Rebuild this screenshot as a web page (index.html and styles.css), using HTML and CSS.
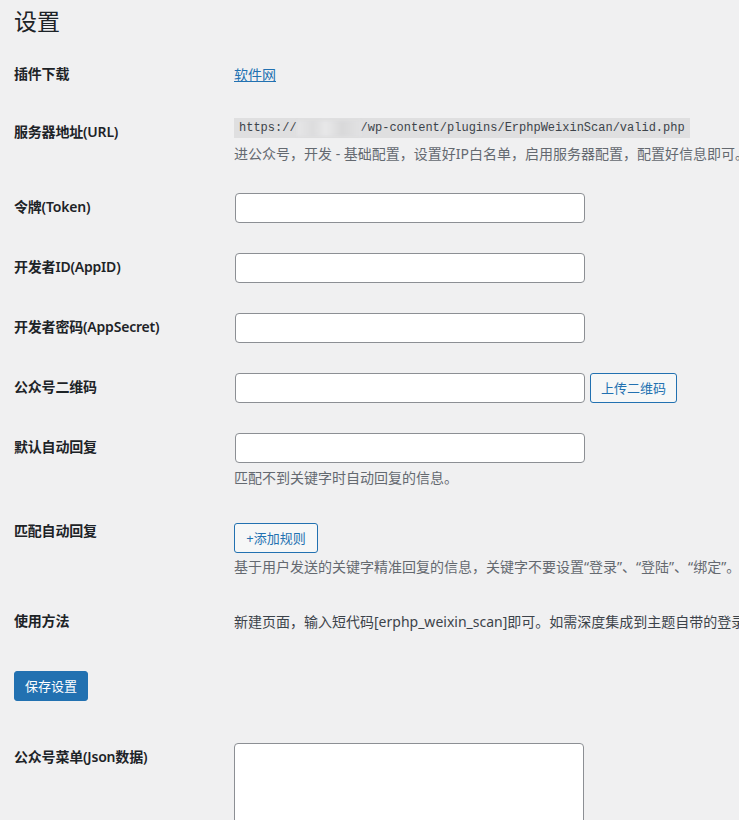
FILE: index.html
```html
<!DOCTYPE html>
<html lang="zh-CN">
<head>
<meta charset="utf-8">
<title>设置</title>
<link rel="stylesheet" href="styles.css">
</head>
<body>
<div class="wrap">
  <h1 class="page-title">设置</h1>
  <form>
    <table class="form-table">
      <tr>
        <th>插件下载</th>
        <td class="text-cell"><a href="#" class="link">软件网</a></td>
      </tr>
      <tr>
        <th>服务器地址(URL)</th>
        <td>
          <div class="code-line"><code>https://<span class="blur"></span>/wp-content/plugins/ErphpWeixinScan/valid.php</code></div>
          <p class="description desc-url">进公众号，开发 - 基础配置，设置好IP白名单，启用服务器配置，配置好信息即可。</p>
        </td>
      </tr>
      <tr>
        <th>令牌(Token)</th>
        <td><input type="text" class="regular-text"></td>
      </tr>
      <tr>
        <th>开发者ID(AppID)</th>
        <td><input type="text" class="regular-text"></td>
      </tr>
      <tr>
        <th>开发者密码(AppSecret)</th>
        <td><input type="text" class="regular-text"></td>
      </tr>
      <tr>
        <th>公众号二维码</th>
        <td>
          <div class="input-row">
            <input type="text" class="regular-text">
            <button type="button" class="button">上传二维码</button>
          </div>
        </td>
      </tr>
      <tr>
        <th>默认自动回复</th>
        <td>
          <input type="text" class="regular-text">
          <p class="description desc-after-input">匹配不到关键字时自动回复的信息。</p>
        </td>
      </tr>
      <tr>
        <th>匹配自动回复</th>
        <td>
          <div class="rule-row"><button type="button" class="button button-add">+添加规则</button></div>
          <p class="description desc-after-button">基于用户发送的关键字精准回复的信息，关键字不要设置“登录”、“登陆”、“绑定”。</p>
        </td>
      </tr>
      <tr>
        <th>使用方法</th>
        <td class="text-cell">新建页面，输入短代码[erphp_weixin_scan]即可。如需深度集成到主题自带的登录里</td>
      </tr>
    </table>
    <p class="submit"><button type="button" class="button button-primary">保存设置</button></p>
    <table class="form-table">
      <tr>
        <th>公众号菜单(Json数据)</th>
        <td><textarea class="menu-json"></textarea></td>
      </tr>
    </table>
  </form>
</div>
</body>
</html>
```

FILE: styles.css
```css
html {
  overflow-x: hidden;
}

body {
  margin: 0;
  background: #f0f0f1;
  color: #3c434a;
  font-family: "Noto Sans", "Noto Sans CJK SC", sans-serif;
  font-size: 13px;
  line-height: 1.4;
}

.wrap {
  padding: 0 0 40px 14px;
}

.page-title {
  margin: 0;
  padding: 7px 0 0;
  font-size: 23px;
  font-weight: 400;
  line-height: 1.3;
  color: #1d2327;
}

.form-table {
  table-layout: fixed;
  width: 725px;
  border-collapse: collapse;
  margin-top: 8px;
  white-space: nowrap;
}

.form-table th {
  width: 200px;
  padding: 20px 10px 20px 0;
  text-align: left;
  vertical-align: top;
  font-size: 14px;
  font-weight: 600;
  line-height: 1.3;
  color: #1d2327;
  letter-spacing: -0.2px;
}

.form-table td {
  padding: 15px 10px;
  vertical-align: top;
  font-size: 14px;
  line-height: 1.3;
  color: #3c434a;
}

.link {
  color: #2271b1;
  text-decoration: underline;
}

.code-line {
  line-height: 20px;
  height: 20px;
}

code {
  display: inline-block;
  vertical-align: top;
  padding: 3px 5px 2px;
  line-height: 15px;
  font-family: "Liberation Mono", "DejaVu Sans Mono", monospace;
  font-size: 12px;
  color: #3c434a;
  background: rgba(0, 0, 0, 0.07);
}

.blur {
  display: inline-block;
  vertical-align: top;
  width: 64px;
  height: 15px;
  background: linear-gradient(90deg, #e6e6e7 0%, #dcdcdd 25%, #e8e8e9 45%, #d8d8d9 70%, #e2e2e3 100%);
  filter: blur(1.5px);
}

.description {
  margin: 0;
  font-size: 14px;
  line-height: 1.3;
  color: #646970;
}

.desc-url {
  margin-top: 7px;
}

.desc-after-input {
  margin-top: 6px;
}

.desc-after-button {
  margin-top: 5px;
}

input.regular-text {
  display: block;
  box-sizing: border-box;
  width: 350px;
  height: 30px;
  margin: 0 0 0 1px;
  padding: 0 8px;
  border: 1px solid #8c8f94;
  border-radius: 4px;
  background: #fff;
  font-size: 14px;
  color: #2c3338;
}

.input-row {
  display: flex;
  gap: 5px;
}

.button {
  box-sizing: border-box;
  display: inline-block;
  height: 30px;
  padding: 0 10px;
  border: 1px solid #2271b1;
  border-radius: 3px;
  background: #f6f7f7;
  color: #2271b1;
  font-family: "Noto Sans", "Noto Sans CJK SC", sans-serif;
  font-size: 13px;
  line-height: 28px;
  cursor: pointer;
}

.input-row .button {
  width: 87px;
  padding: 0;
}

.rule-row {
  margin-top: 6px;
  height: 30px;
}

.button-add {
  width: 84px;
  padding: 0;
}

.form-table td.text-cell {
  padding-top: 21px;
}

.submit {
  margin: 21px 0 0;
  height: 30px;
}

.button-primary {
  width: 74px;
  padding: 0;
  background: #2271b1;
  border-color: #2271b1;
  color: #fff;
}

.submit + .form-table {
  margin-top: 27px;
}

.menu-json {
  display: block;
  box-sizing: border-box;
  width: 350px;
  height: 200px;
  margin: 0;
  border: 1px solid #8c8f94;
  border-radius: 4px;
  background: #fff;
  resize: vertical;
}
```
